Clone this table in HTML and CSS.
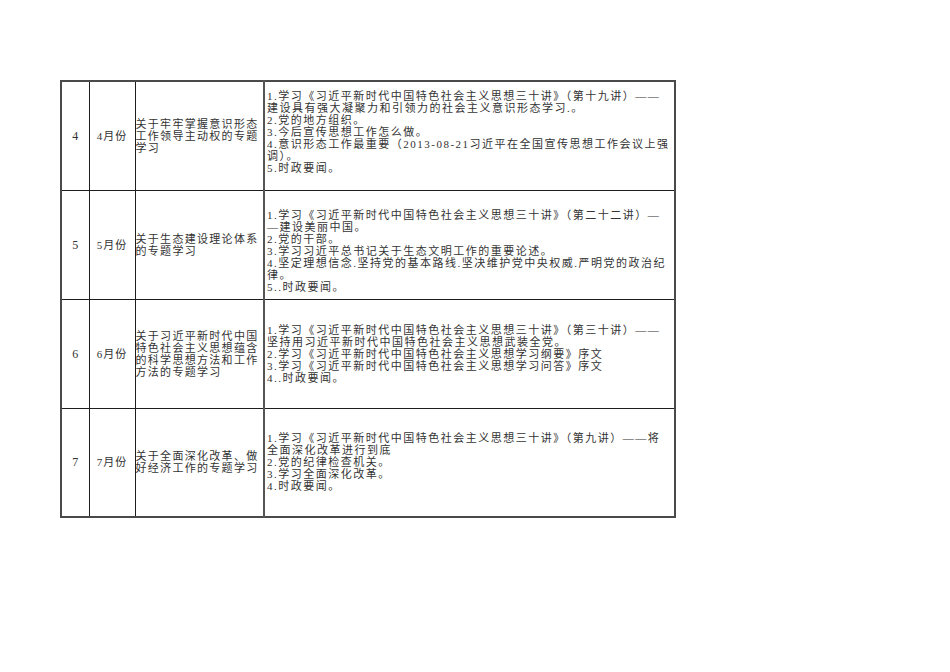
FILE: index.html
```html
<!DOCTYPE html>
<html lang="zh-CN">
<head>
<meta charset="utf-8">
<title>学习计划</title>
<link rel="stylesheet" href="styles.css">
</head>
<body>
<div class="page">
  <table class="sheet">
    <colgroup>
      <col class="c-no">
      <col class="c-month">
      <col class="c-topic">
      <col class="c-content">
    </colgroup>
    <tr class="row row-a">
      <td class="no">4</td>
      <td class="month">4月份</td>
      <td class="topic">关于牢牢掌握意识形态工作领导主动权的专题学习</td>
      <td class="content">
        <div class="item">1.学习《习近平新时代中国特色社会主义思想三十讲》（第十九讲）——<br>建设具有强大凝聚力和引领力的社会主义意识形态学习.。</div>
        <div class="item">2.党的地方组织。</div>
        <div class="item">3.今后宣传思想工作怎么做。</div>
        <div class="item">4.意识形态工作最重要（2013-08-21习近平在全国宣传思想工作会议上强<br>调）。</div>
        <div class="item">5.时政要闻。</div>
      </td>
    </tr>
    <tr class="row row-b">
      <td class="no">5</td>
      <td class="month">5月份</td>
      <td class="topic">关于生态建设理论体系的专题学习</td>
      <td class="content">
        <div class="item">1.学习《习近平新时代中国特色社会主义思想三十讲》（第二十二讲）—<br>—建设美丽中国。</div>
        <div class="item">2.党的干部。</div>
        <div class="item">3.学习习近平总书记关于生态文明工作的重要论述。</div>
        <div class="item">4.坚定理想信念.坚持党的基本路线.坚决维护党中央权威.严明党的政治纪<br>律。</div>
        <div class="item">5..时政要闻。</div>
      </td>
    </tr>
    <tr class="row row-c">
      <td class="no">6</td>
      <td class="month">6月份</td>
      <td class="topic">关于习近平新时代中国特色社会主义思想蕴含的科学思想方法和工作方法的专题学习</td>
      <td class="content">
        <div class="item">1.学习《习近平新时代中国特色社会主义思想三十讲》（第三十讲）——<br>坚持用习近平新时代中国特色社会主义思想武装全党。</div>
        <div class="item">2.学习《习近平新时代中国特色社会主义思想学习纲要》序文</div>
        <div class="item">3.学习《习近平新时代中国特色社会主义思想学习问答》序文</div>
        <div class="item">4..时政要闻。</div>
      </td>
    </tr>
    <tr class="row row-d">
      <td class="no">7</td>
      <td class="month">7月份</td>
      <td class="topic">关于全面深化改革、做好经济工作的专题学习</td>
      <td class="content">
        <div class="item">1.学习《习近平新时代中国特色社会主义思想三十讲》（第九讲）——将<br>全面深化改革进行到底</div>
        <div class="item">2.党的纪律检查机关。</div>
        <div class="item">3.学习全面深化改革。</div>
        <div class="item">4.时政要闻。</div>
      </td>
    </tr>
  </table>
</div>
</body>
</html>
```
FILE: styles.css
```css
html, body {
  margin: 0;
  padding: 0;
  background: #ffffff;
}

.page {
  padding: 80px 0 0 60px;
}

.sheet {
  border-collapse: collapse;
  table-layout: fixed;
  width: 614px;
  border: 2px solid #4a4a4a;
  font-family: "Liberation Serif", "Noto Sans CJK SC", serif;
  font-size: 11px;
  line-height: 12px;
  color: #333333;
}

.c-no { width: 28px; }
.c-month { width: 46px; }
.c-topic { width: 129px; }
.c-content { width: 411px; }

.row { height: 109px; }

.sheet td {
  border: 1px solid #1e1e1e;
  padding: 0;
  vertical-align: middle;
}

.no {
  text-align: center;
  font-size: 12px;
}

.month {
  text-align: center;
  padding-left: 3px;
  letter-spacing: 1px;
}

.topic {
  text-align: left;
  padding: 0 1px 0 2px;
  letter-spacing: 1.3px;
}

.sheet td.content {
  border-left: 2px solid #555555;
  padding-left: 2px;
  letter-spacing: 1.5px;
}

.item {
  white-space: nowrap;
}

.row-a .content { padding-bottom: 8px; }
.row-b .content { padding-top: 12px; }
```
